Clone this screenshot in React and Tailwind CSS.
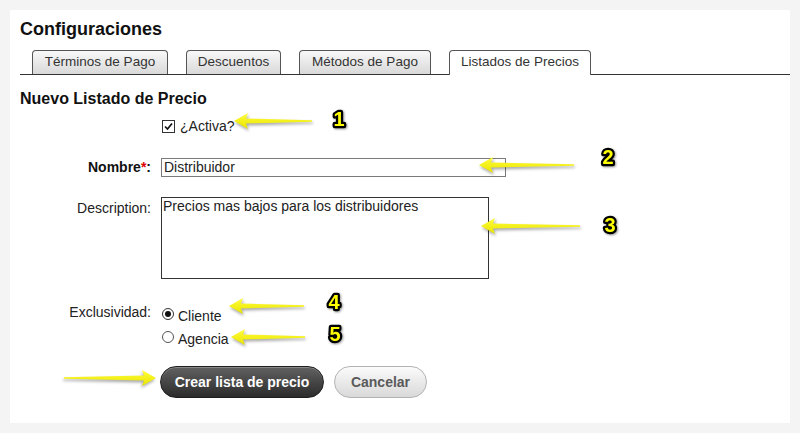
const Arrow = ({ width, className, flip }) => {
  const w = width;
  const points = `1,9 15,1 13,6.5 ${w - 1},8.2 ${w - 1},9.8 13,11.5 15,17`;
  return (
    <svg
      width={w}
      height={18}
      className={`absolute ${className} ${flip ? "-scale-x-100" : ""} drop-shadow-[1px_2px_1.5px_rgba(0,0,0,0.35)]`}
    >
      <defs>
        <linearGradient id={`g${w}`} x1="0" y1="0" x2="0" y2="1">
          <stop offset="0" stopColor="#ffff3a" />
          <stop offset="1" stopColor="#e9e200" />
        </linearGradient>
      </defs>
      <polygon points={points} fill={`url(#g${w})`} />
    </svg>
  );
};

const Badge = ({ n, className }) => (
  <svg width={22} height={24} className={`absolute ${className} drop-shadow-[1px_1px_1px_rgba(0,0,0,0.4)]`}>
    <text
      x="11"
      y="19"
      textAnchor="middle"
      fontFamily="'Liberation Sans', Arial, sans-serif"
      fontWeight="700"
      fontSize="20"
      fill="#ffff00"
      stroke="#000"
      strokeWidth="4.5"
      strokeLinejoin="round"
      paintOrder="stroke"
    >
      {n}
    </text>
  </svg>
);

const Tab = ({ label, width, active }) => (
  <div
    className={`${width} ${
      active
        ? "h-[25px] -mb-px bg-white"
        : "h-[24px] bg-linear-to-b from-[#f8f8f8] to-[#d9d9d9]"
    } border border-b-0 border-[#555] rounded-t-[4px] text-[13.5px] text-[#333] leading-[22px] text-center`}
  >
    {label}
  </div>
);

const App = () => {
  return (
    <div className="relative w-[800px] h-[433px] bg-[#f4f4f4] p-[10px] font-['Liberation_Sans',Arial,sans-serif] text-[#222]">
      <div className="h-[413px] bg-white pl-[10px] pt-[9px]">
        {/* Title */}
        <div className="text-[18px] leading-[21px] font-bold text-[#111]">Configuraciones</div>

        {/* Tabs */}
        <div className="mt-[10px] flex items-end gap-[18px] h-[25px] pl-[12px] border-b border-[#333]">
          <Tab label="Términos de Pago" width="w-[136px]" />
          <Tab label="Descuentos" width="w-[95px]" />
          <Tab label="Métodos de Pago" width="w-[132px]" />
          <Tab label="Listados de Precios" width="w-[142px]" active />
        </div>

        <div className="mt-[14px] text-[16px] leading-[19px] font-bold text-[#111]">Nuevo Listado de Precio</div>

        {/* Form */}
        <div className="text-[14px]">
          <div className="mt-[8px] flex items-center h-[20px]">
            <div className="w-[131px]" />
            <div className="ml-[11px] w-[13px] h-[13px] border border-[#333] bg-white flex items-center justify-center">
              <svg width="11" height="11" viewBox="0 0 11 11">
                <path d="M2 5.5 L4.5 8 L9 2.5" fill="none" stroke="#111" strokeWidth="1.7" />
              </svg>
            </div>
            <span className="ml-[5px] leading-[20px]">¿Activa?</span>
          </div>

          <div className="mt-[22px] flex items-center h-[19px]">
            <div className="w-[131px] text-right font-bold text-[#111]">
              Nombre<span className="text-[#d00]">*</span>:
            </div>
            <div className="ml-[10px] w-[345px] h-[19px] border border-[#7a7a7a] pl-[2px] leading-[17px]">
              Distribuidor
            </div>
          </div>

          <div className="mt-[20px] flex items-start">
            <div className="w-[131px] text-right leading-[20px] pt-[1px]">Description:</div>
            <div className="ml-[10px] w-[328px] h-[82px] border border-[#333] pl-[1px] leading-[16px]">
              Precios mas bajos para los distribuidores
            </div>
          </div>

          <div className="mt-[23px] flex items-start">
            <div className="w-[131px] text-right leading-[20px]">Exclusividad:</div>
            <div className="ml-[10px] pt-[4px] flex flex-col gap-[3px]">
              <div className="flex items-start h-[20px]">
                <span className="ml-[1px] mt-[2px] w-[12px] h-[12px] rounded-full border border-[#333] flex items-center justify-center">
                  <span className="w-[6px] h-[6px] rounded-full bg-[#111]" />
                </span>
                <span className="ml-[4px] leading-[20px]">Cliente</span>
              </div>
              <div className="flex items-start h-[20px]">
                <span className="ml-[1px] mt-[2px] w-[12px] h-[12px] rounded-full border border-[#555]" />
                <span className="ml-[4px] leading-[20px]">Agencia</span>
              </div>
            </div>
          </div>

          <div className="mt-[17px] flex ml-[140px]">
            <button className="h-[32px] w-[164px] rounded-full border border-[#1e1e1e] bg-linear-to-b from-[#626262] to-[#2c2c2c] text-white font-bold text-[14px] shadow-[inset_0_1px_0_rgba(255,255,255,0.25)]">
              Crear lista de precio
            </button>
            <button className="ml-[10px] h-[32px] w-[93px] rounded-full border border-[#b3b3b3] bg-linear-to-b from-[#fbfbfb] to-[#d9d9d9] text-[#5a5a5a] font-bold text-[14px]">
              Cancelar
            </button>
          </div>
        </div>
      </div>

      {/* Annotations */}
      <Arrow width={80} className="left-[233px] top-[112px]" />
      <Arrow width={97} className="left-[478px] top-[156px]" />
      <Arrow width={101} className="left-[480px] top-[217px]" />
      <Arrow width={77} className="left-[228px] top-[297px]" />
      <Arrow width={76} className="left-[230px] top-[328px]" />
      <Arrow width={94} className="left-[63px] top-[369px]" flip />
      <Badge n="1" className="left-[328px] top-[107px]" />
      <Badge n="2" className="left-[597px] top-[145px]" />
      <Badge n="3" className="left-[599px] top-[213px]" />
      <Badge n="4" className="left-[323px] top-[290px]" />
      <Badge n="5" className="left-[324px] top-[322px]" />
    </div>
  );
};

export default App;
